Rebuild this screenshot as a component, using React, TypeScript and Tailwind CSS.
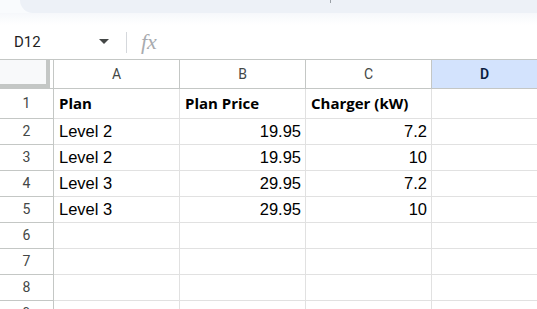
import React from 'react';

const rows: { n: number; a: string; b: string; c: string; bold?: boolean }[] = [
  { n: 1, a: 'Plan', b: 'Plan Price', c: 'Charger (kW)', bold: true },
  { n: 2, a: 'Level 2', b: '19.95', c: '7.2' },
  { n: 3, a: 'Level 2', b: '19.95', c: '10' },
  { n: 4, a: 'Level 3', b: '29.95', c: '7.2' },
  { n: 5, a: 'Level 3', b: '29.95', c: '10' },
  { n: 6, a: '', b: '', c: '' },
  { n: 7, a: '', b: '', c: '' },
  { n: 8, a: '', b: '', c: '' },
  { n: 9, a: '', b: '', c: '' },
];

const cellFont = { fontFamily: '"Liberation Sans", Arial, sans-serif' };
const boldFont = { fontFamily: '"Open Sans", "Liberation Sans", sans-serif' };
const uiFont = { fontFamily: 'Roboto, "Liberation Sans", sans-serif' };

export default function App() {
  return (
    <div className="h-[309px] w-[537px] overflow-hidden bg-white">
      {/* toolbar edge */}
      <div className="h-[13px] bg-[#f9fbfd]">
        <div className="relative ml-[20px] h-full rounded-bl-[14px] bg-[#edf1f7]">
          <div className="absolute left-[310px] top-0 h-[3px] w-px bg-[#9aa0a6]" />
        </div>
      </div>
      <div className="h-[12px] bg-gradient-to-b from-[#f6f8fb] to-white" />

      {/* formula bar */}
      <div className="flex h-[34px] items-center" style={uiFont}>
        <div className="w-[96px] pl-[14px] text-[15px] text-[#1f1f1f]">D12</div>
        <svg width="10" height="6" viewBox="0 0 10 6" className="ml-[3px]">
          <path d="M0 0 L10 0 L5 5 Z" fill="#444746" />
        </svg>
        <div className="ml-[17px] h-[21px] w-px bg-[#d5d8dc]" />
        <span
          className="ml-[14px] text-[22px] italic leading-none text-[#a8abaf]"
          style={{ fontFamily: '"Liberation Serif", serif' }}
        >
          fx
        </span>
      </div>

      {/* grid */}
      <div className="border-t border-[#c4c7c5]">
        {/* header row */}
        <div className="flex h-[29px] border-b border-[#c4c7c5] text-[14px] text-[#444746]" style={uiFont}>
          <div className="h-full w-[54px] border-r border-[#c4c7c5]">
            <div className="h-full w-[50px] border-b-4 border-r-4 border-[#c4c7c5] bg-[#f8f9fa]" />
          </div>
          {['A', 'B', 'C'].map((c) => (
            <div key={c} className="flex w-[126px] items-center justify-center border-r border-[#c4c7c5]">
              {c}
            </div>
          ))}
          <div className="flex flex-1 items-center justify-center bg-[#d3e3fd] font-semibold text-[#0b1d3f]">D</div>
        </div>

        {rows.map((r) => (
          <div
            key={r.n}
            className={`flex border-b border-[#e1e1e1] ${r.n === 1 ? 'h-[30px]' : 'h-[26px]'}`}
          >
            <div
              className="-mb-px flex w-[54px] items-center justify-center border-b border-r border-[#c4c7c5] text-[14px] text-[#444746]"
              style={uiFont}
            >
              {r.n}
            </div>
            <div
              className={`flex w-[126px] items-center border-r border-[#e1e1e1] pl-[5px] text-[#000] ${r.bold ? 'text-[15px] font-bold' : 'text-[16.5px]'}`}
              style={r.bold ? boldFont : cellFont}
            >
              {r.a}
            </div>
            <div
              className={`flex w-[126px] items-center border-r border-[#e1e1e1] text-[#000] ${r.bold ? 'justify-start pl-[5px] text-[15px] font-bold' : 'justify-end pr-[4px] text-[16.5px]'}`}
              style={r.bold ? boldFont : cellFont}
            >
              {r.b}
            </div>
            <div
              className={`flex w-[126px] items-center border-r border-[#e1e1e1] text-[#000] ${r.bold ? 'justify-start pl-[5px] text-[15px] font-bold' : 'justify-end pr-[4px] text-[16.5px]'}`}
              style={r.bold ? boldFont : cellFont}
            >
              {r.c}
            </div>
            <div className="flex-1" />
          </div>
        ))}
      </div>
    </div>
  );
}
